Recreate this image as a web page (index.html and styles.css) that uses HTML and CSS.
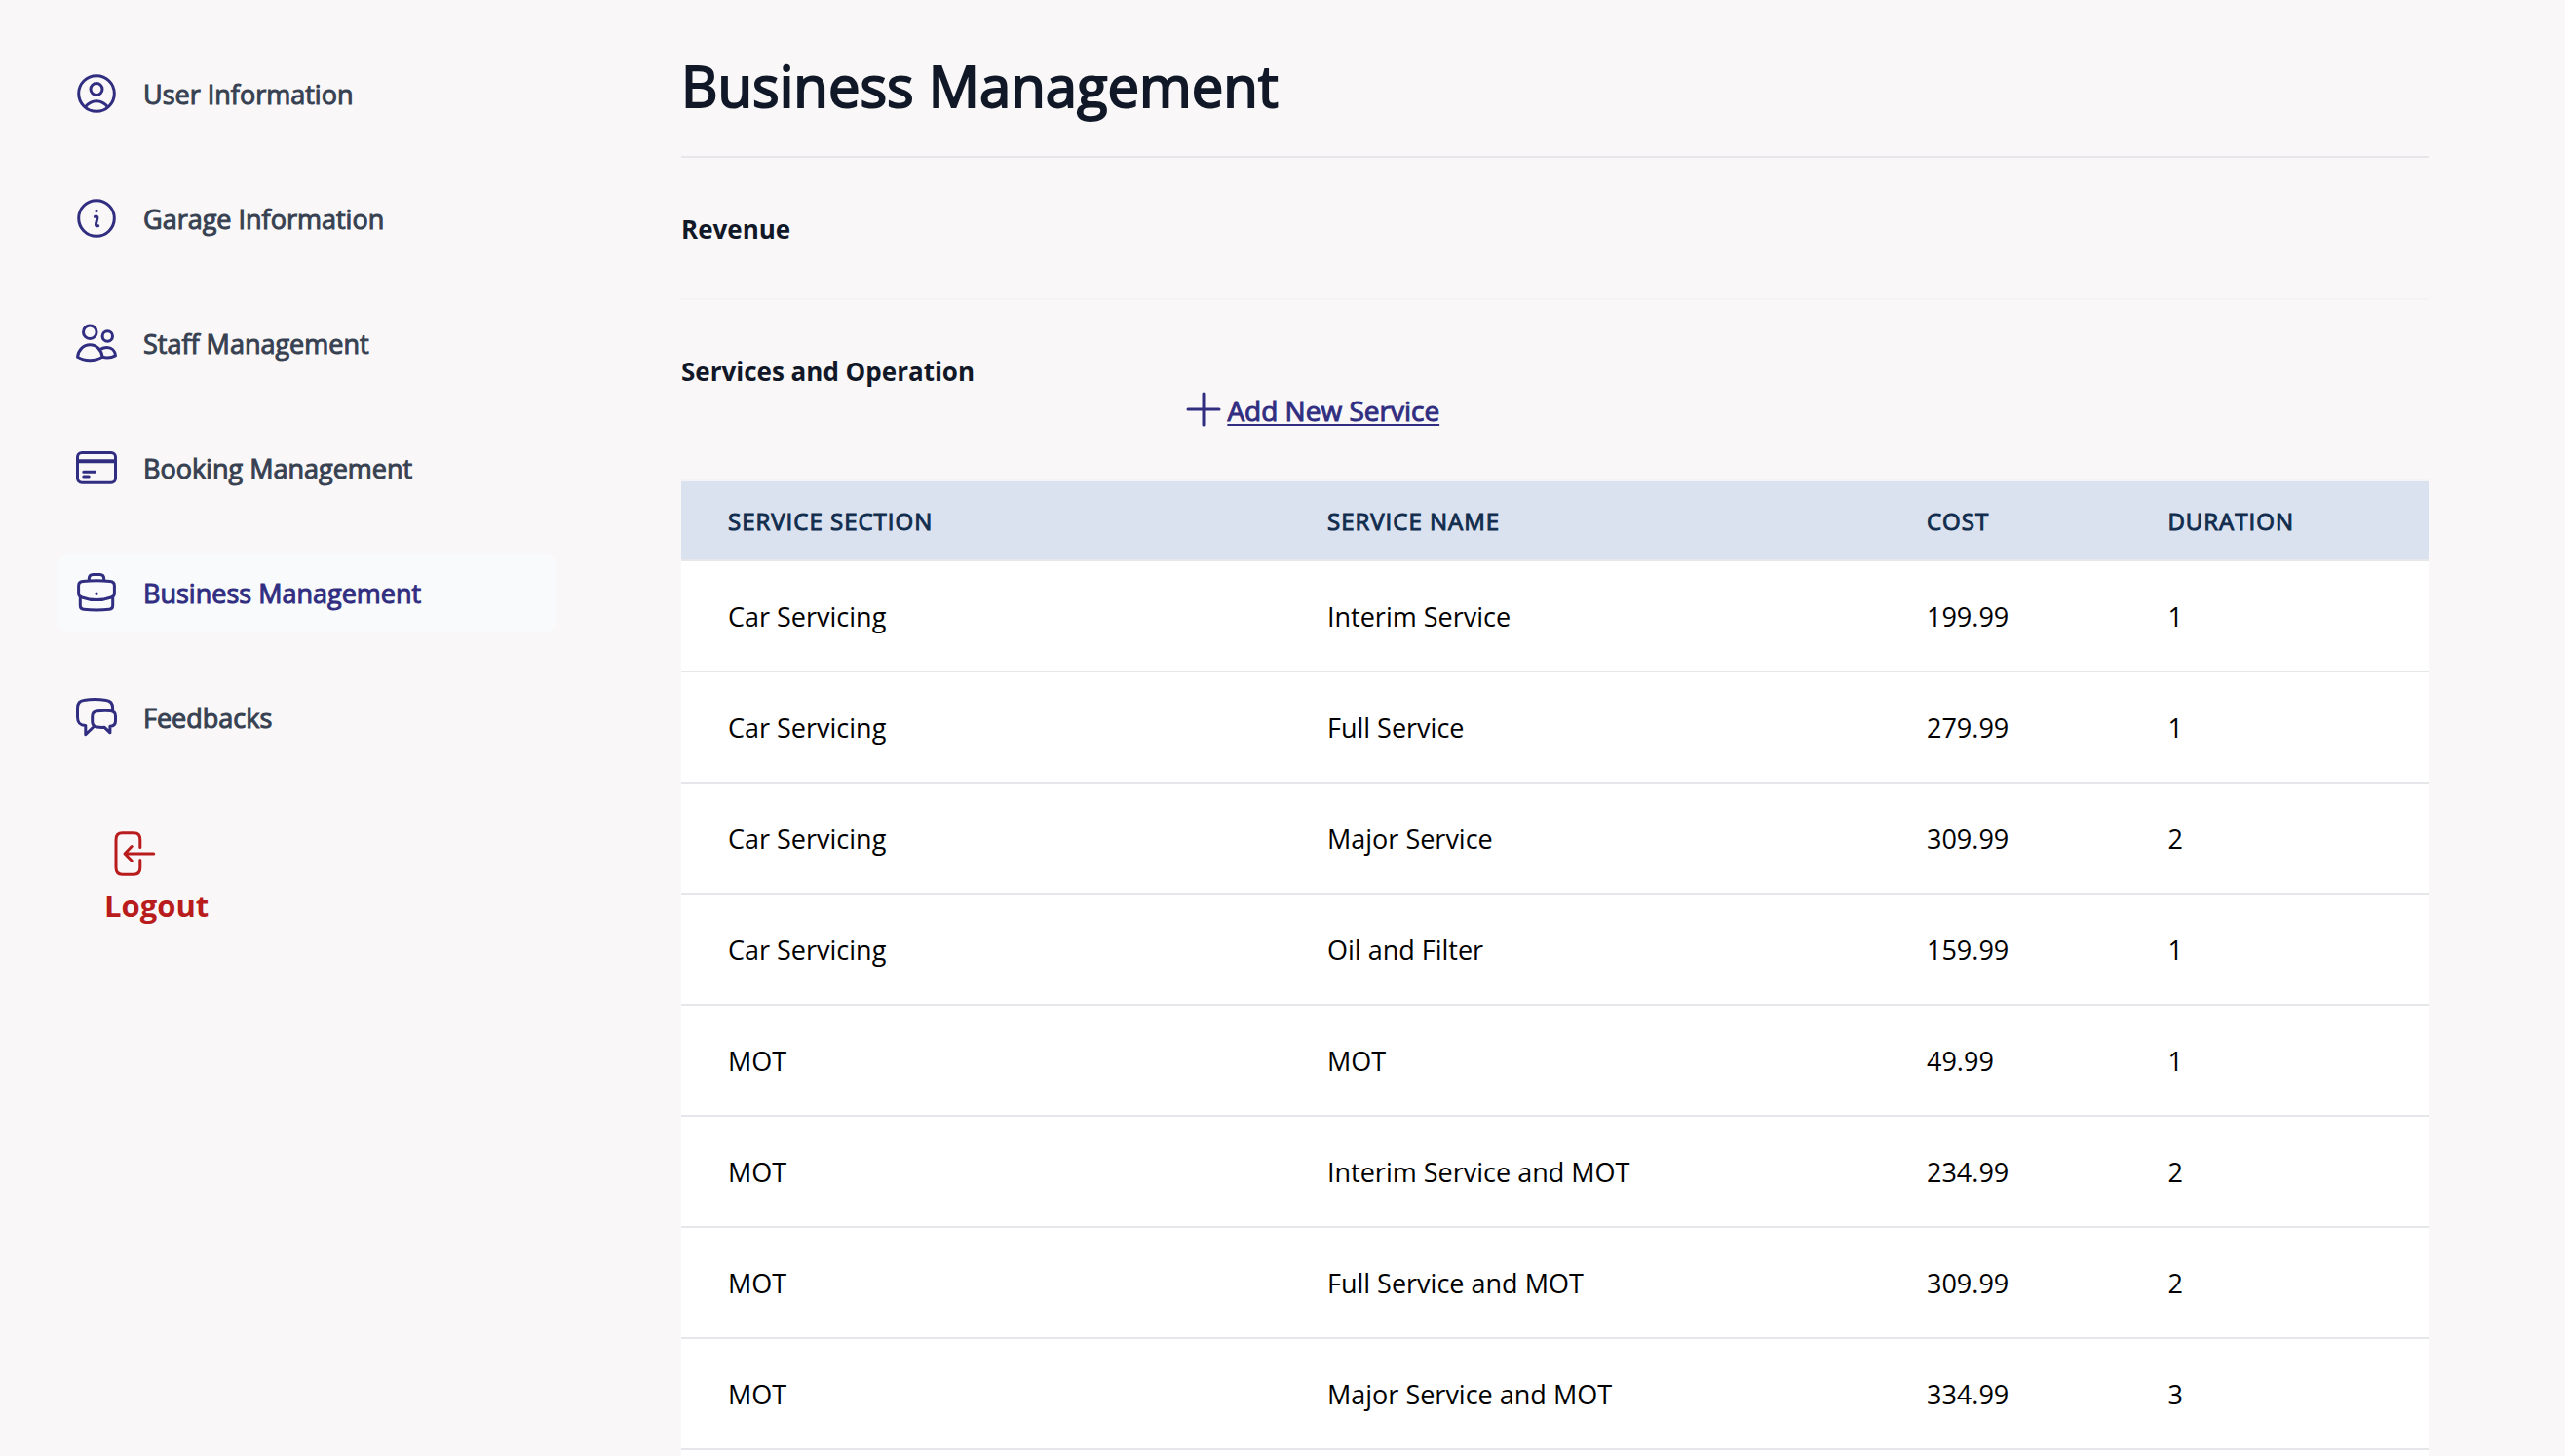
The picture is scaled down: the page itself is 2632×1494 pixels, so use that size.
FILE: index.html
```html
<!DOCTYPE html>
<html lang="en">
<head>
<meta charset="utf-8">
<meta name="viewport" content="width=device-width, initial-scale=1">
<title>Business Management</title>
<link rel="stylesheet" href="styles.css">
</head>
<body>
<div class="page">
  <aside class="sidebar">
    <nav class="nav">
      <a class="nav-item" href="#user">
        <svg class="icon" viewBox="0 0 48 48" aria-hidden="true"><circle cx="24" cy="24" r="18.3"/><circle cx="24" cy="19.5" r="6"/><path d="M12.5 37.8C15.5 34 19.5 31.7 24 31.7S32.500 34 35.500 37.800"/></svg>
        <span>User Information</span>
      </a>
      <a class="nav-item" href="#garage">
        <svg class="icon" viewBox="0 0 48 48" aria-hidden="true"><circle cx="24" cy="24" r="18.3"/><circle class="dot" cx="24" cy="16.400" r="1.700"/><path d="M22.400 22.300C24 21.600 25.200 22.300 24.900 24L23.500 29.600C23.100 31.500 24 32.200 25.700 31.700"/></svg>
        <span>Garage Information</span>
      </a>
      <a class="nav-item" href="#staff">
        <svg class="icon" viewBox="0 0 48 48" aria-hidden="true"><circle cx="17.300" cy="12.700" r="6.800"/><circle cx="35.300" cy="17" r="5.200"/><path d="M4.500 38.300C5.300 31 10.500 25.800 17.300 25.800S29.300 31 30.100 38.300C22.500 42.900 12 42.900 4.500 38.300Z"/><path d="M28.300 30.300C30.300 28.900 32.500 28.400 34.800 28.400C39.500 28.400 43.100 31.800 43.500 36.900C39.500 39 34.500 39.500 30 38.300"/></svg>
        <span>Staff Management</span>
      </a>
      <a class="nav-item" href="#booking">
        <svg class="icon" viewBox="0 0 48 48" aria-hidden="true"><rect x="4.500" y="8.500" width="39" height="30.700" rx="4.500"/><path class="band" d="M4.500 17.200H43.500"/><path d="M10.800 28.300H22.500M10.800 33H16.200"/></svg>
        <span>Booking Management</span>
      </a>
      <a class="nav-item active" href="#business" aria-current="page">
        <svg class="icon" viewBox="0 0 48 48" aria-hidden="true"><path d="M16.300 11.600V10C16.300 7 17.500 5.500 20.500 5.500H27.500C30.500 5.500 31.700 7 31.700 10V11.600"/><path d="M5.600 17C5.600 14 7 12.900 10 12.600C19 11.600 29 11.600 38 12.600C41 12.900 42.400 14 42.400 17V24.500C42.400 27 41.500 28.200 39 29C29.500 32.300 18.500 32.300 9 29C6.500 28.200 5.600 27 5.600 24.500Z"/><path d="M7.300 28.200V37.500C7.300 40 8.300 41 10.800 41.300C19.500 42.300 28.500 42.300 37.200 41.300C39.700 41 40.700 40 40.700 37.500V28.200"/><circle class="dot" cx="24" cy="25.300" r="1.700"/></svg>
        <span>Business Management</span>
      </a>
      <a class="nav-item" href="#feedbacks">
        <svg class="icon" viewBox="0 0 48 48" aria-hidden="true"><path d="M40.600 16.800V14.500C40.600 9.500 38.500 7 34 6.500C26.500 5.300 18 5.300 11 6.500C6.500 7 4.500 9.500 4.500 14.500V24C4.500 29.500 6.500 32.300 12.800 32.400V41.800L20.800 34"/><path d="M24.500 17.800C30 17 34.500 17 38.500 17.600C42 18 43.500 19.500 43.500 23V28C43.500 31.500 42 33 37.900 33.300V39.800L32.200 34.300C29.500 34.500 27 34.400 24.500 34C21 33.600 19.700 32 19.700 28.500V23C19.700 19.500 21 18.200 24.500 17.800Z"/></svg>
        <span>Feedbacks</span>
      </a>
    </nav>
    <button class="logout" type="button">
      <svg class="logout-icon" viewBox="0 0 56 56" aria-hidden="true"><path d="M31.800 21.500V13.700C31.800 9.500 29.500 6.800 25.300 6.800H13.500C9.300 6.800 7 9.500 7 13.700V42.300C7 46.500 9.300 49.200 13.500 49.200H25.300C29.500 49.200 31.800 46.500 31.800 42.300V34.500"/><path d="M45.700 28H16.500M23.200 20.500L16 28L23.200 35.300"/></svg>
      <span>Logout</span>
    </button>
  </aside>

  <main class="main">
    <h1 class="title">Business Management</h1>
    <section class="section">
      <h2 class="heading">Revenue</h2>
    </section>
    <section class="section services">
      <h2 class="heading">Services and Operation</h2>
      <a class="add" href="#new-service">
        <svg class="add-icon" viewBox="0 0 40 40" aria-hidden="true"><path d="M20 3V35M4 19H36"/></svg>
        <span class="add-text">Add New Service</span>
      </a>
    </section>
    <div class="table-wrap">
      <table class="table">
        <colgroup><col class="col-section"><col class="col-name"><col class="col-cost"><col class="col-duration"></colgroup>
        <thead>
          <tr><th scope="col">Service Section</th><th scope="col">Service Name</th><th scope="col">Cost</th><th scope="col">Duration</th></tr>
        </thead>
        <tbody>
          <tr><td>Car Servicing</td><td>Interim Service</td><td>199.99</td><td>1</td></tr>
          <tr><td>Car Servicing</td><td>Full Service</td><td>279.99</td><td>1</td></tr>
          <tr><td>Car Servicing</td><td>Major Service</td><td>309.99</td><td>2</td></tr>
          <tr><td>Car Servicing</td><td>Oil and Filter</td><td>159.99</td><td>1</td></tr>
          <tr><td>MOT</td><td>MOT</td><td>49.99</td><td>1</td></tr>
          <tr><td>MOT</td><td>Interim Service and MOT</td><td>234.99</td><td>2</td></tr>
          <tr><td>MOT</td><td>Full Service and MOT</td><td>309.99</td><td>2</td></tr>
          <tr><td>MOT</td><td>Major Service and MOT</td><td>334.99</td><td>3</td></tr>
        </tbody>
      </table>
    </div>
  </main>
</div>
</body>
</html>
```
FILE: styles.css
```css
* {
  box-sizing: border-box;
  margin: 0;
  padding: 0;
}

body {
  background: #f9f7f8;
  color: #000;
  font-family: "Segoe UI", "Open Sans", "Noto Sans", sans-serif;
  font-size: 27px;
  line-height: 40px;
}

.page {
  display: flex;
  gap: 128px;
  min-height: 100vh;
  padding: 0 140px 0 59px;
}

.sidebar {
  flex: 0 0 512px;
  padding-top: 56px;
}

.nav {
  display: flex;
  flex-direction: column;
  gap: 48px;
}

.nav-item {
  display: flex;
  align-items: center;
  gap: 24px;
  height: 80px;
  padding: 0 16px;
  border-radius: 12px;
  color: #374151;
  font-weight: 500;
  text-decoration: none;
}

/* Medium weight for faces that only ship regular and bold */
.nav-item span,
.add-text,
.table th {
  -webkit-text-stroke: 1px currentColor;
}

.nav-item span {
  padding-top: 2px;
}

.nav-item.active {
  background: #f9fafc;
  color: #312e81;
}

.icon,
.logout-icon,
.add-icon {
  flex: none;
  fill: none;
  stroke: #312e81;
  stroke-width: 3;
  stroke-linecap: round;
  stroke-linejoin: round;
}

.icon {
  width: 48px;
  height: 48px;
}

.icon .dot {
  fill: #312e81;
  stroke: none;
}

.icon .band {
  stroke-width: 4;
  stroke-linecap: butt;
}

.logout {
  display: flex;
  flex-direction: column;
  align-items: flex-start;
  margin: 72px 0 0 48px;
  border: 0;
  background: none;
  color: #b91c1c;
  font: inherit;
  font-size: 31px;
  font-weight: 700;
  line-height: 50px;
  cursor: pointer;
}

.logout-icon {
  width: 56px;
  height: 56px;
  margin-left: 5px;
  stroke: #b91c1c;
}

.main {
  display: flex;
  flex: 1;
  flex-direction: column;
  min-width: 0;
}

.title {
  padding: 48px 0 32px;
  border-bottom: 2px solid #e5e7eb;
  color: #111827;
  font-size: 58px;
  font-weight: 500;
  line-height: 80px;
  -webkit-text-stroke: 2px currentColor;
}

.section {
  padding: 53px 0 51px;
  border-bottom: 2px solid #f3f4f6;
}

.services {
  display: flex;
  flex-direction: column;
}

.heading {
  color: #111827;
  font-size: 26px;
  font-weight: 700;
  line-height: 40px;
}

.add {
  display: flex;
  align-items: center;
  gap: 4px;
  align-self: flex-start;
  margin-left: 28.8%;
  color: #312e81;
  font-size: 28px;
  font-weight: 500;
  text-decoration: none;
}

.add-icon {
  width: 40px;
  height: 40px;
}

.add-text {
  text-decoration: underline;
  text-decoration-thickness: 2px;
  text-underline-offset: 3px;
}

.table-wrap {
  flex: 1;
  background: #fff;
}

.table {
  width: 100%;
  border-collapse: separate;
  border-spacing: 0;
  table-layout: fixed;
  text-align: left;
}

.col-section,
.col-name {
  width: 34.3%;
}

.col-cost {
  width: 13.8%;
}

.table th,
.table td {
  padding: 37px 48px 35px;
  border-bottom: 2px solid #e5e7eb;
  white-space: nowrap;
}

.table th {
  padding: 21px 48px 19px;
  background: #dbe2ef;
  color: #112d4e;
  font-size: 24px;
  font-weight: 500;
  letter-spacing: 1px;
  text-transform: uppercase;
}
```
